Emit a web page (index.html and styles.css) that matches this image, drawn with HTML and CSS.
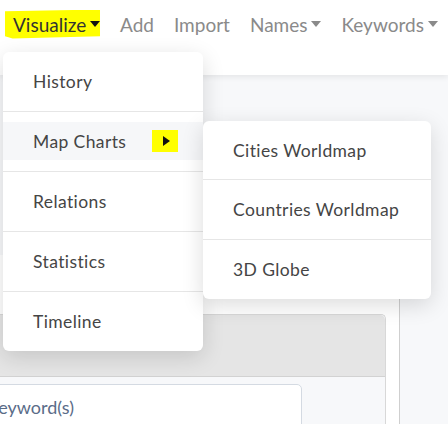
FILE: index.html
```html
<!DOCTYPE html>
<html>
<head>
<meta charset="utf-8">
<link rel="stylesheet" href="styles.css">
</head>
<body>
<header class="navbar">
  <nav class="nav">
    <span class="nav-item active"><span class="hl">Visualize<span class="caret dark"></span></span></span>
    <span class="nav-item">Add</span>
    <span class="nav-item">Import</span>
    <span class="nav-item">Names<span class="caret"></span></span>
    <span class="nav-item">Keywords<span class="caret"></span></span>
  </nav>
</header>
<main class="page">
  <section class="panel">
    <div class="card">
      <div class="card-header"></div>
      <div class="card-body">
        <div class="input">Keyword(s)</div>
      </div>
    </div>
  </section>
  <aside class="side"></aside>
</main>

<div class="menu">
  <div class="menu-item"><span>History</span></div>
  <div class="menu-item sub"><div class="hover-row"><span>Map Charts</span><span class="arrow-box"><span class="arrow"></span></span></div></div>
  <div class="menu-item"><span>Relations</span></div>
  <div class="menu-item"><span>Statistics</span></div>
  <div class="menu-item"><span>Timeline</span></div>
</div>
<div class="submenu">
  <div class="menu-item"><span>Cities Worldmap</span></div>
  <div class="menu-item"><span>Countries Worldmap</span></div>
  <div class="menu-item"><span>3D Globe</span></div>
</div>
</body>
</html>
```
FILE: styles.css
```css
* { box-sizing: border-box; }
html, body { margin: 0; padding: 0; }
body {
  width: 448px;
  height: 424px;
  overflow: hidden;
  background: #f7f8fa;
  font-family: Lato, "Noto Sans", sans-serif;
  color: #454545;
  position: relative;
}
.navbar {
  height: 75px;
  background: #fff;
  box-shadow: 0 2px 6px rgba(0,0,0,0.08);
  position: relative;
  z-index: 2;
}
.nav {
  display: flex;
  align-items: center;
  height: 48px;
  padding-left: 13px;
  gap: 20px;
  font-size: 19px;
  color: #8a8a8a;
}
.nav-item { display: inline-flex; align-items: center; }
.active { color: #333; }
.hl {
  display: inline-flex;
  align-items: center;
  background: #ffff00;
  margin-left: -8px;
  padding: 3px 0 3px 8px;
  width: 95px;
  clip-path: polygon(0 6%, 100% 0, 100% 92%, 8% 100%, 0 92%);
}
.caret {
  display: inline-block;
  width: 0; height: 0;
  border-left: 5px solid transparent;
  border-right: 5px solid transparent;
  border-top: 6px solid #8a8a8a;
  margin-left: 4px;
}
.caret.dark { border-top-color: #111; }

.page {
  display: flex;
  height: 349px;
}
.panel {
  width: 400px;
  margin-top: 180px;
  background: #fff;
  border-right: 1px solid #cfcfcf;
  padding: 59px 13px 0 0;
  display: flex;
  align-items: flex-start;
}
.card {
  flex: 1;
  margin-left: -44px;
  border: 1px solid #d8d8d8;
  border-bottom: none;
  border-radius: 5px 5px 0 0;
  background: #f7f8fa;
  display: flex;
  flex-direction: column;
  height: 110px;
  overflow: hidden;
  flex-shrink: 0;
}
.card-header {
  flex: none;
  height: 62px;
  background: #e5e5e5;
  border-bottom: 1px solid #d2d2d2;
  border-radius: 5px 5px 0 0;
}
.card-body { padding: 7px 83px 0 16px; flex: none; }
.input {
  height: 60px;
  background: #fff;
  border: 1px solid #d4dae2;
  border-radius: 5px;
  padding: 9px 12px 9px 13px;
  line-height: 26px;
  color: #5a6c88;
  font-size: 18px;
}
.side { flex: 1; }

.menu, .submenu {
  position: absolute;
  background: #fff;
  border-radius: 6px;
  box-shadow: 0 6px 22px rgba(0,0,0,0.14);
  z-index: 5;
  font-size: 17.5px;
  letter-spacing: 0.4px;
  color: #454545;
  display: flex;
  flex-direction: column;
}
.menu { left: 3px; top: 52px; width: 200px; height: 299px; }
.submenu { left: 203px; top: 121px; width: 228px; height: 178px; }
.menu-item {
  height: 60px;
  flex: none;
  border-bottom: 1px solid #e6e6e6;
  display: flex;
  align-items: center;
  padding-left: 30px;
}
.menu-item:last-child { border-bottom: none; height: 59px; }
.submenu .menu-item:first-child { height: 59px; }
.menu-item.sub { padding-left: 0; align-items: flex-start; padding-top: 10px; }
.hover-row {
  height: 38px;
  width: 100%;
  background: #f6f7f9;
  display: flex;
  align-items: center;
  padding-left: 30px;
}
.arrow-box {
  margin-left: 26px;
  width: 26px;
  height: 22px;
  background: #ffff00;
  display: inline-flex;
  align-items: center;
  justify-content: center;
}
.arrow {
  width: 0; height: 0;
  border-top: 5px solid transparent;
  border-bottom: 5px solid transparent;
  border-left: 7px solid #111;
  margin-left: 2px;
}
```
